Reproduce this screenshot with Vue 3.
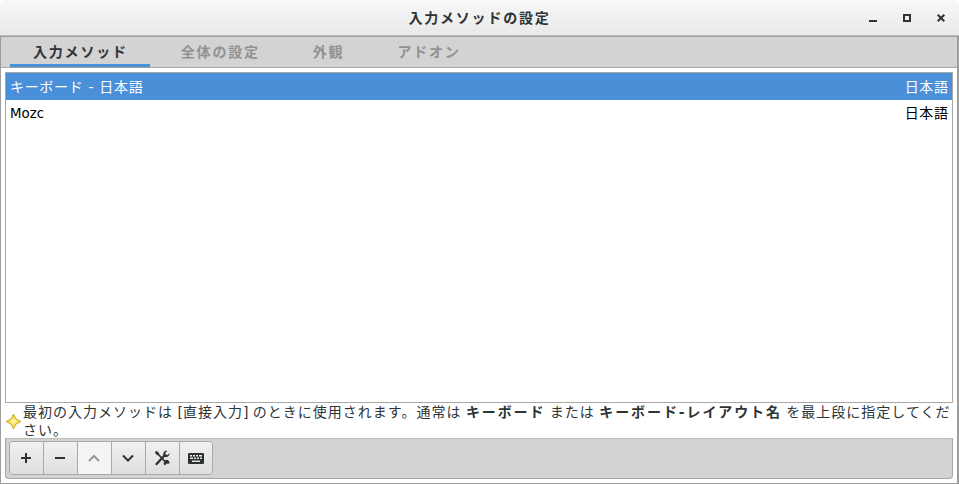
<script setup>
const tabs = ['入力メソッド', '全体の設定', '外観', 'アドオン']
const rows = [
  { name: 'キーボード - 日本語', lang: '日本語', selected: true },
  { name: 'Mozc', lang: '日本語', selected: false, latin: true }
]
</script>

<template>
  <div class="window">
    <header class="titlebar">
      <div class="title">入力メソッドの設定</div>
      <div class="controls">
        <svg width="12" height="12" viewBox="0 0 12 12"><rect x="3" y="9" width="8" height="2" fill="#2e3436"/></svg>
        <svg width="12" height="12" viewBox="0 0 12 12"><path d="M3 3h8v8H3z M5 5v4h4V5z" fill="#2e3436" fill-rule="evenodd"/></svg>
        <svg width="12" height="12" viewBox="0 0 12 12"><path d="M3.700 3.700l6.600 6.600M10.300 3.700l-6.600 6.600" stroke="#2e3436" stroke-width="2" fill="none"/></svg>
      </div>
    </header>
    <div class="body">
      <nav class="tabs">
        <div v-for="(t, i) in tabs" :key="t" class="tab" :class="{ active: i === 0 }">{{ t }}</div>
      </nav>
      <main class="page">
        <div class="list">
          <div v-for="r in rows" :key="r.name" class="row" :class="{ selected: r.selected }">
            <span :class="{ latin: r.latin }">{{ r.name }}</span><span>{{ r.lang }}</span>
          </div>
        </div>
        <div class="hint">
          <svg class="star" width="17" height="17" viewBox="0 0 17 17">
            <defs>
              <radialGradient id="starFill" cx="50%" cy="50%" r="50%">
                <stop offset="0%" stop-color="#fff6ac"/>
                <stop offset="100%" stop-color="#eccb2e"/>
              </radialGradient>
            </defs>
            <path d="M8.500 1.200L11 6l4.800 2.500L11 11l-2.500 4.800L6 11 1.200 8.500 6 6z" fill="url(#starFill)" stroke="#c9a80e" stroke-width="1" stroke-linejoin="round"/>
          </svg>
          <p>最初の入力メソッドは <span class="tight">[</span>直接入力<span class="tight">]</span> のときに使用されます。通常は <b>キーボード</b> または <b>キーボード-レイアウト名</b> を最上段に指定してください。</p>
        </div>
        <div class="toolbar">
          <div class="group">
            <button><svg width="16" height="16" viewBox="0 0 16 16"><path d="M8 3v10M3 8h10" stroke="#2e3436" stroke-width="2"/></svg></button>
            <button><svg width="16" height="16" viewBox="0 0 16 16"><path d="M3 8h10" stroke="#2e3436" stroke-width="2"/></svg></button>
            <button class="disabled"><svg width="16" height="16" viewBox="0 0 16 16"><path d="M3 11l5-5 5 5" stroke="#92989a" stroke-width="2" fill="none"/></svg></button>
            <button><svg width="16" height="16" viewBox="0 0 16 16"><path d="M3 5.500l5 5 5-5" stroke="#2e3436" stroke-width="2" fill="none"/></svg></button>
            <button><svg width="16" height="16" viewBox="0 0 16 16"><path d="M3 3l9 9.500" stroke="#2e3436" stroke-width="1.800" fill="none"/><path d="M.8 2.400L2.400.8l3 2.400-2.200 2.200z" fill="#2e3436"/><path d="M2.600 14l7.400-8" stroke="#2e3436" stroke-width="2.400" stroke-linecap="round" fill="none"/><path d="M12 .6a3.600 3.600 0 0 0-2.600 4.800l1.400 1.300a3.600 3.600 0 0 0 4.700-2.800l-.1-.7-2 1.800-1.700-.4-.4-1.700 1.900-2z" fill="#2e3436"/><path d="M15.400 13.600a2.900 2.900 0 0 0-3.600-3.600l-1.800 1.800a2.900 2.900 0 0 0 .9 3.700l1.700-1.900 1.300.2z" fill="#2e3436"/></svg></button>
            <button><svg width="16" height="16" viewBox="0 0 16 16"><path d="M1 3h14a1 1 0 0 1 1 1v9a1 1 0 0 1-1 1H1a1 1 0 0 1-1-1V4a1 1 0 0 1 1-1z M2 5v1.500h2V5z M5 5v1.500h2V5z M8 5v1.500h2V5z M11 5v1.500h3V5z M2 7.500V9h3V7.500z M6 7.500V9h2V7.500z M9 7.500V9h2V7.500z M12 7.500V9h2V7.500z M4 10.500V12h8v-1.500z" fill="#2e3436" fill-rule="evenodd"/></svg></button>
          </div>
        </div>
      </main>
    </div>
  </div>
</template>

<style>
html, body { margin: 0; background: #fff; }
</style>

<style scoped>
.window {
  width: 959px; height: 484px; box-sizing: border-box; display: flex; flex-direction: column;
  font-family: "DejaVu Sans", "Noto Sans CJK JP", sans-serif; font-size: 14px; color: #2e3436; overflow: hidden;
}
.titlebar {
  height: 36px; flex: none; position: relative; display: flex; align-items: center; justify-content: center; box-sizing: border-box;
  background: linear-gradient(#f8f8f8, #e9e9e9); border-bottom: 1px solid #bdbdbd; border-radius: 6px 6px 0 0;
}
.title { font-weight: 700; letter-spacing: 1.8px; line-height: 20px; }
.controls { position: absolute; right: 13px; top: 11px; display: flex; gap: 22px; }
.controls svg { display: block; }
.body { flex: 1; display: flex; flex-direction: column; border: 1px solid #9d9d9d; border-right-width: 2px; min-height: 0; }
.tabs { height: 30px; flex: none; display: flex; padding-left: 9px; background: #d3d3d3; border-bottom: 1px solid #a6a6a6; }
.tab { padding: 0 22px 0 23px; margin-right: 8px; font-weight: 700; letter-spacing: 1.8px; color: #929292; line-height: 30px; height: 30px; box-sizing: border-box; }
.tab.active { color: #2e3436; border-bottom: 3px solid #4a90d9; }
.page { flex: 1; min-height: 0; display: flex; flex-direction: column; padding: 4px 4px 0; background: #fff; }
.list { flex: none; border: 1px solid #a8a8a8; box-sizing: border-box; height: 331px; }
.row { height: 26px; display: flex; justify-content: space-between; align-items: center; padding: 0 4px; color: #000; letter-spacing: .67px; line-height: 26px; }
.row span:last-child { margin-right: -.67px; }
.row .latin { font-size: 13.33px; letter-spacing: 0; position: relative; top: 1px; }
.row.selected { height: 27px; background: #4a90d9; color: #fff; }
.hint { display: flex; align-items: center; height: 35px; flex: none; letter-spacing: 1px; }
.star { flex: none; margin-right: 1px; margin-top: 1px; }
.hint p { margin: 0; line-height: 18px; width: 930px; flex: none; word-spacing: -1px; }
.hint .tight { letter-spacing: 0; }
.hint b { font-weight: 700; letter-spacing: 1.9px; }
.toolbar { flex: 1; background: #d3d3d3; border: 1px solid #a6a6a6; border-top: 0; border-radius: 0 0 4px 4px; padding: 3px 3px; margin-bottom: 5px; display: flex; box-shadow: inset 0 1px 1px #bbb; }
.group { display: flex; height: 34px; border: 1px solid #a9a9a9; border-radius: 4px; overflow: hidden; box-sizing: border-box; }
.group button { width: 34px; padding: 0; border: 0; border-right: 1px solid #a9a9a9; background: linear-gradient(#f1f1f1, #dedede); display: flex; align-items: center; justify-content: center; }
.group button svg { margin-left: -1px; }
.group button:last-child { border-right: 0; width: 32px; }
.group button:last-child svg { margin-left: 0; }
.group button.disabled { background: #f4f4f4; }
</style>
